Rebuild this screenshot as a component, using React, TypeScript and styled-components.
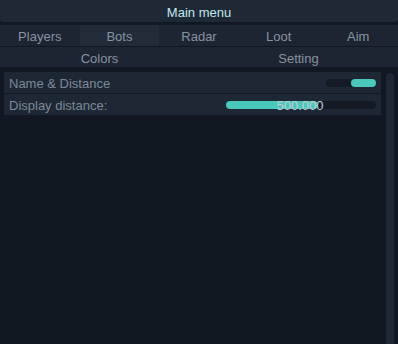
import styled, { createGlobalStyle } from 'styled-components';

const GlobalStyle = createGlobalStyle`
  html, body {
    margin: 0;
    padding: 0;
    background: #111821;
    font-family: "Liberation Sans", Arial, sans-serif;
    font-size: 13px;
  }
`;

const Window = styled.div`
  width: 398px;
  height: 344px;
  display: flex;
  flex-direction: column;
  background: #111821;
  overflow: hidden;
`;

const TitleBar = styled.div`
  height: 22px;
  padding-top: 2px;
  box-sizing: border-box;
  display: flex;
  align-items: center;
  justify-content: center;
  background: #1f2936;
  color: #bfeaea;
  border-radius: 0 0 3px 3px;
`;

const TabRow = styled.div<{ $cols: number; $gap: number }>`
  display: grid;
  grid-template-columns: repeat(${p => p.$cols}, 1fr);
  margin-top: ${p => p.$gap}px;
  height: ${p => (p.$cols === 5 ? 21 : 20)}px;
  background: #1c2531;
`;

const Tab = styled.div<{ $active?: boolean }>`
  display: flex;
  align-items: center;
  justify-content: center;
  padding-top: 2px;
  color: #8793a0;
  background: ${p => (p.$active ? '#222c39' : 'transparent')};
`;

const Body = styled.div`
  flex: 1;
  display: flex;
  gap: 5px;
  padding: 5px 4px 0 4px;
`;

const Panel = styled.div`
  flex: 1;
  align-self: flex-start;
  display: flex;
  flex-direction: column;
  gap: 1px;
`;

const Row = styled.div`
  height: 21px;
  box-sizing: border-box;
  display: flex;
  align-items: center;
  justify-content: space-between;
  padding: 0 5px;
  background: #1e2834;
  color: #7c8895;
`;

const Label = styled.span`
  padding-top: 2px;
`;

const Toggle = styled.div<{ $on?: boolean }>`
  width: 50px;
  height: 8px;
  border-radius: 4px;
  background: #141b25;
  display: flex;
  justify-content: ${p => (p.$on ? 'flex-end' : 'flex-start')};
`;

const Knob = styled.div`
  width: 25px;
  height: 8px;
  border-radius: 4px;
  background: #4ac8bb;
`;

const Slider = styled.div`
  position: relative;
  width: 150px;
  height: 8px;
  border-radius: 4px;
  background: #141b25;
`;

const Fill = styled.div`
  height: 8px;
  border-radius: 4px;
  background: #4ac8bb;
`;

const SliderValue = styled.span`
  position: absolute;
  left: 0;
  right: 0;
  top: -3px;
  text-align: center;
  transform: translateX(-1px);
  color: #c3ccd4;
  font-size: 13px;
  line-height: 16px;
`;

const Scrollbar = styled.div`
  width: 8px;
  margin-top: 1px;
  border-radius: 4px 4px 0 0;
  background: #1e2834;
`;

const tabs = ['Players', 'Bots', 'Radar', 'Loot', 'Aim'];

export default function App() {
  const value = 500;
  const max = 815;
  return (
    <Window>
      <GlobalStyle />
      <TitleBar>Main menu</TitleBar>
      <TabRow $cols={5} $gap={3}>
        {tabs.map(t => (
          <Tab key={t} $active={t === 'Bots'}>{t}</Tab>
        ))}
      </TabRow>
      <TabRow $cols={2} $gap={1}>
        <Tab>Colors</Tab>
        <Tab>Setting</Tab>
      </TabRow>
      <Body>
        <Panel>
          <Row>
            <Label>Name &amp; Distance</Label>
            <Toggle $on>
              <Knob />
            </Toggle>
          </Row>
          <Row>
            <Label>Display distance:</Label>
            <Slider>
              <Fill style={{ width: `${(value / max) * 100}%` }} />
              <SliderValue>{value.toFixed(3)}</SliderValue>
            </Slider>
          </Row>
        </Panel>
        <Scrollbar />
      </Body>
    </Window>
  );
}
